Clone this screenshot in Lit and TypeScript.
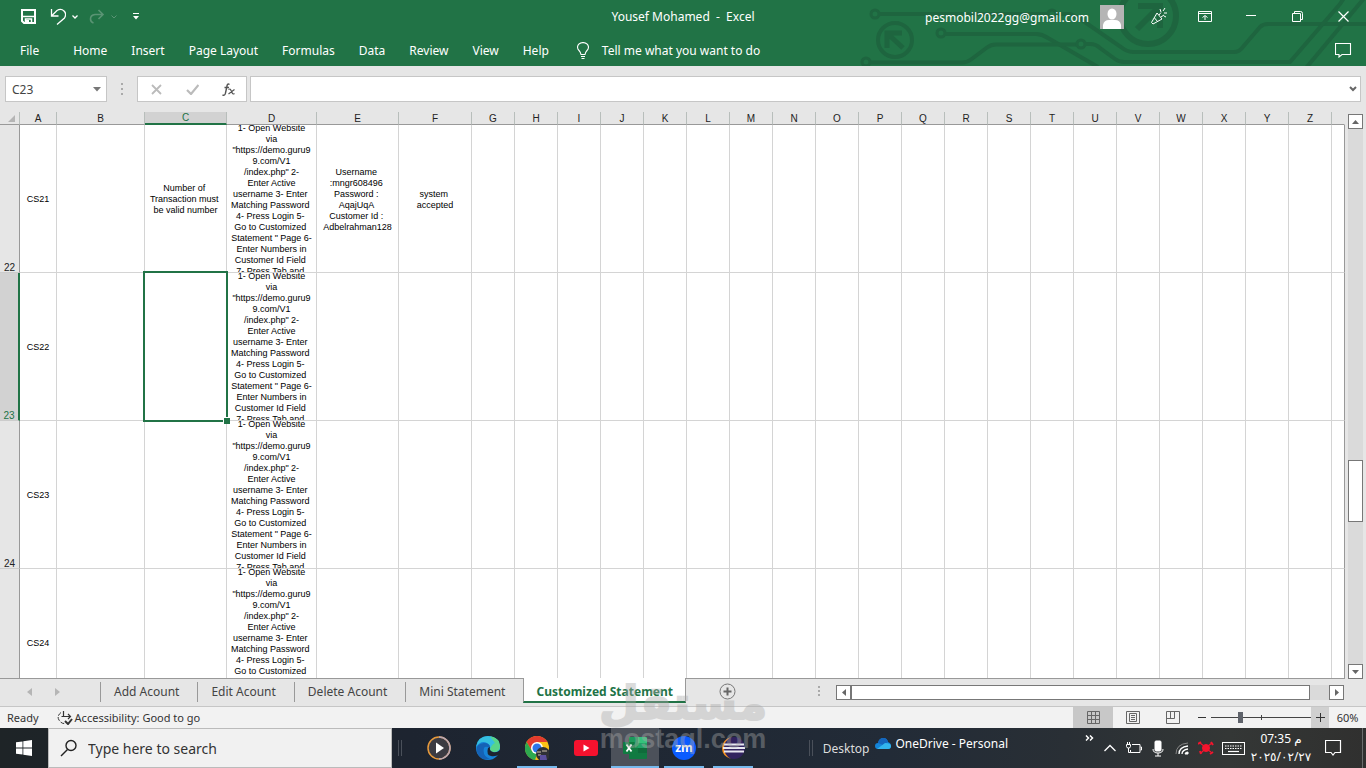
import { LitElement, html, css, svg, nothing } from "lit";
import { customElement } from "lit/decorators.js";
import { classMap } from "lit/directives/class-map.js";

const ui = css`
  * { box-sizing: border-box; }
  button, input, select { font: inherit; color: inherit; margin: 0; }
  button { background: none; border: 0; padding: 0; display: flex; align-items: center; justify-content: center; white-space: nowrap; }
  svg { display: block; flex: none; }
  .sr { position: absolute; width: 1px; height: 1px; overflow: hidden; clip-path: inset(50%); }
`;

const glyph = (w: number, h: number, body: unknown) =>
  html`<svg width=${w} height=${h} viewBox="0 0 ${w} ${h}" fill="none" stroke="currentColor" aria-hidden="true">${body}</svg>`;

/* ---------- Title bar and ribbon tabs ---------- */

@customElement("x-ribbon")
class Ribbon extends LitElement {
  static styles = [ui, css`
    :host { display: block; position: relative; background: #217346; color: #fff; font-size: 12px; overflow: hidden; }
    .art { position: absolute; right: 0; top: 0; color: #1e653f; }
    .title { position: relative; display: grid; grid-template-columns: 1fr auto 1fr; height: 33px; align-items: center; }
    .quick { display: flex; align-items: center; padding-left: 21px; }
    .quick button { height: 32px; }
    .undo { margin-left: 14px; gap: 6px; }
    .redo { margin-left: 11px; gap: 6px; color: #5a9474; }
    .more { margin-left: 16px; }
    .name { margin: 0; font-size: 12px; font-weight: 400; white-space: pre; }
    .account { display: flex; justify-content: flex-end; align-items: center; }
    .mail { padding: 2px 11px 0 0; color: #fff; text-decoration: none; }
    .avatar { margin-right: 12px; }
    .account button { width: 46px; height: 32px; }
    .tabs { position: relative; display: flex; align-items: center; height: 33px; padding: 2px 14px 0 20px; }
    .tabs button { height: 30px; margin-right: 24px; }
    .tabs .file { margin-right: 34px; }
    .tabs .tell { gap: 13px; margin: 0 auto 0 4px; }
    .tabs .note { margin: 0; }
  `];
  render() {
    return html`
      <svg class="art" width="510" height="66" viewBox="856 0 510 66" fill="none" stroke="currentColor" stroke-width="4" aria-hidden="true">
        <circle cx="875" cy="14" r="4" stroke-width="3"/><path d="M879 14H1048"/><circle cx="1052" cy="14" r="4" stroke-width="3"/>
        <path d="M1056 14h14l9 4 42 29q6 5 12 5h101q5 0 8-4l18-21q3-3 8-3h98"/>
        <circle cx="895" cy="40" r="17"/><path d="M887 48V33h15M888 34l15 14" stroke-width="5"/>
        <circle cx="941" cy="33" r="4" stroke-width="3"/><path d="M945 34h91q6 0 12 4l50 29"/>
        <circle cx="866" cy="62" r="4" stroke-width="3"/><path d="M870 62.500h92q5 0 9-3l16-12q4-3 9-3h81"/>
        <circle cx="1081" cy="44" r="4" stroke-width="3"/><path d="M1085 44h5q6 0 10 4l15 11q4 3 9 3h166l50-58 4-6M1306 68l60-72"/>
        <circle cx="1148" cy="16" r="28" stroke-width="6"/><path d="M1138 6h22v22M1159 7l-22 22" stroke-width="6"/>
      </svg>
      <header class="title">
        <div class="quick">
          <button aria-label="Save">${glyph(15, 15, svg`<path d="M1 1h13v13H3L1 12z" stroke-width="2"/><path d="M2 7.500h11M4.500 14v-4h6v4" stroke-width="1.500"/><path d="M5 11h3v3H5z" fill="currentColor" stroke="none"/>`)}</button>
          <button class="undo" aria-label="Undo">${glyph(16, 17, svg`<path d="M1.500 1v7h7M1.500 8L7 2.500Q11 0 14 3t.5 7L7 16.500" stroke-width="1.300"/>`)}${glyph(6, 4, svg`<path d="M.5.5L3 3 5.500.5" stroke-width="1.300"/>`)}</button>
          <button class="redo" aria-label="Redo" disabled>${glyph(16, 15, svg`<path d="M9.500 1L14 5.500 9.500 10M14 5.500H6Q1.500 6 1.500 10q0 3 3 4" stroke-width="1.600"/>`)}${glyph(6, 4, svg`<path d="M.5.5L3 3 5.500.5"/>`)}</button>
          <button class="more" aria-label="Customize toolbar">${glyph(6, 7, svg`<path d="M0 .5h6"/><path d="M0 3h6L3 6.500z" fill="currentColor" stroke="none"/>`)}</button>
        </div>
        <h1 class="name">Yousef Mohamed  -  Excel</h1>
        <div class="account">
          <a class="mail" href="#">pesmobil2022gg@gmail.com</a>
          <svg class="avatar" width="24" height="24" viewBox="0 0 24 24" aria-hidden="true"><path fill="#b4b4b4" d="M0 0h24v24H0z"/><ellipse cx="12" cy="9" rx="4.500" ry="5.500" fill="#fff"/><path d="M3 24v-4q1-5 6-5h6q5 0 6 5v4z" fill="#fff"/></svg>
          <button aria-label="What's new">${glyph(16, 17, svg`<path d="M6 5l5 6-9 5-1.500-1.500zM3.500 10l3.500 4M8 7L10 4.500M10 9l3-2M9 1l1 3M12 3l2-3M13 5h3M13 8l2 1"/>`)}</button>
          <button aria-label="Ribbon display options">${glyph(14, 11, svg`<path d="M.5.5h13v10H.5zM.5 2.500h13M7 9V5M4.500 6.500L7 4.500l2.500 2"/>`)}</button>
          <button aria-label="Minimize">${glyph(10, 3, svg`<path d="M0 .5h10"/>`)}</button>
          <button aria-label="Restore">${glyph(11, 11, svg`<path d="M.5 2.500h8v8h-8zM2.500 2V.5h6q2 0 2 2v6H9"/>`)}</button>
          <button aria-label="Close">${glyph(11, 11, svg`<path d="M.5.5l10 10M10.500.5l-10 10" stroke-width="1.200"/>`)}</button>
        </div>
      </header>
      <nav class="tabs">
        <button class="file">File</button>
        ${["Home", "Insert", "Page Layout", "Formulas", "Data", "Review", "View", "Help"].map((t) => html`<button>${t}</button>`)}
        <button class="tell">${glyph(12, 17, svg`<path d="M4 12.500Q3.500 10 2 8.500.5 7 .5 5q.5-4 5.500-4.500 5 .5 5.500 4.500 0 2-1.500 3.500T8 12.500zM4 14.500h4M4.500 16.500h3" stroke-width="1.100"/>`)}Tell me what you want to do</button>
        <button class="note" aria-label="Comments">${glyph(17, 15, svg`<path d="M.5.500h15v11H7L4 14v-2.500H.5z" stroke-width="1.100"/>`)}</button>
      </nav>`;
  }
}

/* ---------- Formula bar ---------- */

@customElement("x-formula-bar")
class FormulaBar extends LitElement {
  static styles = [ui, css`
    :host { display: flex; align-items: center; padding: 10px 5px; font-size: 12px; color: #444; }
    .box { height: 26px; background: #fff; border: 1px solid #c6c6c6; display: flex; align-items: center; }
    .cell { width: 102px; padding-right: 5px; }
    input { border: 0; outline: 0; background: none; padding: 0 6px; min-width: 0; flex: 1; height: 24px; }
    .grip { margin: 0 13px 0 14px; color: #aaa; }
    .actions { width: 110px; margin-right: 3px; color: #bbb; justify-content: space-around; }
    .actions button { width: 36px; height: 24px; }
    .actions .fx { color: #555; }
    .formula { flex: 1; padding-right: 3px; }
  `];
  render() {
    return html`
      <div class="box cell"><input aria-label="Name box" value="C23"><button aria-label="Names">${glyph(8, 5, svg`<path d="M0 0h8L4 4.500z" fill="#777" stroke="none"/>`)}</button></div>
      <svg class="grip" width="3" height="12" viewBox="0 0 3 12" fill="currentColor"><path d="M0 0h2v2H0zM0 5h2v2H0zM0 10h2v2H0z"/></svg>
      <div class="box actions">
        <button aria-label="Cancel">${glyph(11, 11, svg`<path d="M1 1l9 9M10 1l-9 9" stroke-width="1.800"/>`)}</button>
        <button aria-label="Enter">${glyph(13, 11, svg`<path d="M1 6l4 4 7.500-9" stroke-width="2.200"/>`)}</button>
        <button class="fx" aria-label="Insert function">${glyph(13, 13, svg`<path d="M7.500 1.500Q5.500 0 5 3L3.500 10Q3 13 .5 12M2.500 4.500h4.500" stroke-width="1.400"/><path d="M6.500 6.500q1.500-1 2 0l2 4q.5 1 2 0M12.500 6.500l-6 4.500" stroke-width="1.200"/>`)}</button>
      </div>
      <div class="box formula"><input aria-label="Formula"><button aria-label="Expand formula bar">${glyph(8, 6, svg`<path d="M1 1l3 3 3-3" stroke="#666" stroke-width="2"/>`)}</button></div>`;
  }
}

/* ---------- Worksheet grid ---------- */

const STEPS = ["1- Open Website", "via", "\"https://demo.guru9", "9.com/V1", "/index.php\" 2-", "Enter Active", "username 3- Enter ", "Matching Password ", "4- Press Login 5- ", "Go to Customized ", "Statement \" Page 6-", "Enter Numbers in", "Customer Id Field ", "7- Press Tab and "];
const WIDTHS: Record<string, string> = { A: "a", B: "b", C: "c", D: "d", E: "e", F: "f" };
const COLS = [..."ABCDEFGHIJKLMNOPQRSTUVWXYZ"];
const ROWS: { n: number; cells: Record<string, string[]> }[] = [
  { n: 22, cells: { A: ["CS21"], C: ["Number of ", "Transaction must ", "be valid number"], D: STEPS, E: ["Username ", ":mngr608496 ", "Password : ", "AqajUqA ", "Customer Id : ", "Adbelrahman128"], F: ["system ", "accepted"] } },
  { n: 23, cells: { A: ["CS22"], D: STEPS } },
  { n: 24, cells: { A: ["CS23"], D: STEPS } },
  { n: 25, cells: { A: ["CS24"], D: STEPS } },
];

@customElement("x-sheet")
class Sheet extends LitElement {
  static styles = [ui, css`
    :host { display: flex; min-height: 0; flex: 1; font-family: "Liberation Sans", Arial, sans-serif; }
    .view { flex: 1; min-width: 0; overflow: hidden; border-bottom: 1px solid #999; background: #fff; }
    table { width: 100%; border-collapse: separate; border-spacing: 0; table-layout: fixed; }
    .n { width: 20px; } .a { width: 37px; } .b { width: 88px; } .c { width: 82px; } .d { width: 90px; }
    .e { width: 82px; } .f { width: 73px; } .g { width: 43px; }
    th { background: #e6e6e6; font-weight: 400; color: #222; padding: 0; }
    thead th { height: 13px; font-size: 10px; line-height: 11px; border-bottom: 1px solid #999; border-right: 1px solid #b8bebb; }
    thead th.on { background: #d2d2d2; color: #217346; border-bottom: 2px solid #217346; }
    thead th:last-child { border-right-color: #e6e6e6; }
    .corner svg { margin-left: auto; margin-right: 4px; }
    tbody th { vertical-align: bottom; font-size: 10px; line-height: 8px; border-right: 1px solid #999; border-bottom: 1px solid #ccc; }
    tbody th.on { background: #d2d2d2; color: #217346; border-right: 2px solid #217346; }
    td { padding: 0; border-right: 1px solid #d4d4d4; border-bottom: 1px solid #d4d4d4; position: relative; }
    td:last-child { border-right-color: #999; }
    .text { height: 147px; padding-top: 2px; overflow: hidden; display: flex; flex-direction: column; justify-content: center; align-items: center; font-size: 9px; line-height: 11px; color: #000; white-space: pre; }
    .line { flex: none; }
    .pick { position: absolute; inset: -2px; border: 2px solid #217346; z-index: 1; }
    .knob { position: absolute; right: -4px; bottom: -4px; width: 7px; height: 7px; background: #217346; border: solid #fff; border-width: 1px 0 0 1px; }
    .bar { width: 21px; padding: 2px 3px 0; display: flex; flex-direction: column; background: #e6e6e6; }
    .bar button, .thumb { background: #fff; border: 1px solid #777; height: 15px; color: #666; }
    .track { flex: 1; background: #dadada; display: grid; grid-template-rows: 332fr 62fr 142fr; }
    .track .thumb { grid-row: 2; height: auto; }
  `];
  render() {
    return html`
      <div class="view">
        <table>
          <colgroup><col class="n">${COLS.map((c) => html`<col class=${WIDTHS[c] ?? "g"}>`)}<col></colgroup>
          <thead><tr><th class="corner">${glyph(7, 7, svg`<path d="M7 0v7H0z" fill="#b5b5b5" stroke="none"/>`)}</th>${COLS.map((c) => html`<th scope="col" class=${classMap({ on: c === "C" })}>${c}</th>`)}<th></th></tr></thead>
          <tbody>${ROWS.map((r) => html`<tr>
            <th scope="row" class=${classMap({ on: r.n === 23 })}>${r.n}</th>
            ${[...COLS, ""].map((c) => html`<td>${c === "A" || r.cells[c] ? html`<div class="text">${r.cells[c].map((l) => html`<span class="line">${l}</span>`)}</div>` : nothing}${c === "C" && r.n === 23 ? html`<div class="pick"><i class="knob"></i></div>` : nothing}</td>`)}
          </tr>`)}</tbody>
        </table>
      </div>
      <div class="bar">
        <button aria-label="Scroll up">${glyph(7, 4, svg`<path d="M0 4h7L3.500 0z" fill="currentColor" stroke="none"/>`)}</button>
        <div class="track"><div class="thumb"></div></div>
        <button aria-label="Scroll down">${glyph(7, 4, svg`<path d="M0 0h7L3.500 4z" fill="currentColor" stroke="none"/>`)}</button>
      </div>`;
  }
}

/* ---------- Sheet tabs and status bar ---------- */

@customElement("x-footer")
class Footer extends LitElement {
  static styles = [ui, css`
    :host { display: block; color: #444; }
    .sheets { display: flex; height: 28px; border-bottom: 1px solid #c6c6c6; font-size: 12px; align-items: flex-start; }
    .move { display: flex; width: 100px; height: 26px; padding-left: 15px; color: #b5b5b5; }
    .move button { width: 28px; }
    .tab { height: 20px; margin-top: 3px; padding: 0 18px 0 13px; border-left: 1px solid #999; line-height: 20px; }
    .tab.on { height: 25px; margin: -1px 0 0; padding: 4px 12px 0; background: #fff; color: #217346; font-weight: 700; border: solid #999; border-width: 0 1px; border-bottom: 2px solid #217346; }
    .add { margin: 4px auto 0 33px; }
    .grip { margin: 7px 15px 0 0; color: #aaa; }
    .scroll { display: flex; width: 508px; height: 15px; margin: 6px 22px 0 0; background: #dadada; }
    .scroll button { width: 15px; height: 15px; background: #fff; border: 1px solid #777; color: #666; }
    .thumb { flex: 1; background: #fff; border: 1px solid #777; margin-right: 19px; }
    .status { display: flex; align-items: center; height: 21px; background: #f2f2f2; font-size: 11px; padding-left: 7px; color: #333; }
    .access { margin: 0 auto 0 18px; gap: 2px; }
    .mode { width: 40px; height: 21px; color: #666; }
    .mode.on { background: #c8c8c8; }
    .step { width: 18px; height: 21px; color: #333; }
    .plus { background: #d0d0d0; }
    .zoom { position: relative; width: 100px; height: 21px; display: flex; align-items: center; }
    .zoom::before { content: ""; position: absolute; left: 50%; top: 8px; height: 5px; width: 1px; background: #444; }
    .range { appearance: none; width: 100%; height: 11px; background: linear-gradient(#444, #444) center / 100% 1px no-repeat; }
    .range::-webkit-slider-thumb { appearance: none; width: 5px; height: 11px; background: #5f636b; }
    .pct { width: 37px; }
  `];
  render() {
    return html`
      <div class="sheets">
        <div class="move">
          <button aria-label="Previous sheets">${glyph(5, 8, svg`<path d="M5 0v8L0 4z" fill="currentColor" stroke="none"/>`)}</button>
          <button aria-label="Next sheets">${glyph(5, 8, svg`<path d="M0 0v8l5-4z" fill="currentColor" stroke="none"/>`)}</button>
        </div>
        ${["Add Acount", "Edit Acount", "Delete Acount", "Mini Statement", "Customized Statement"].map((t, i) => html`<button class=${classMap({ tab: true, on: i === 4 })}>${t}</button>`)}
        <button class="add" aria-label="New sheet">${glyph(17, 17, svg`<circle cx="8.500" cy="8.500" r="7.500" stroke="#777"/><path d="M8.500 4.500v8M4.500 8.500h8" stroke="#666" stroke-width="2"/>`)}</button>
        <svg class="grip" width="3" height="12" viewBox="0 0 3 12" fill="currentColor"><path d="M0 0h2v2H0zM0 4h2v2H0zM0 8h2v2H0z"/></svg>
        <div class="scroll">
          <button aria-label="Scroll left">${glyph(4, 7, svg`<path d="M4 0v7L0 3.500z" fill="currentColor" stroke="none"/>`)}</button>
          <div class="thumb"></div>
          <button aria-label="Scroll right">${glyph(4, 7, svg`<path d="M0 0v7l4-3.500z" fill="currentColor" stroke="none"/>`)}</button>
        </div>
      </div>
      <div class="status">
        <span>Ready</span>
        <button class="access">${glyph(16, 14, svg`<path d="M4 1.500Q-.5 5 2 9t6 3.500" stroke-dasharray="4 1.500"/><path d="M6.500 0v5M4.500 5.500h9M11 3l2.500 2.500L11 8" stroke-width="1.200"/><path d="M8 10l3 3 4-5" stroke-width="2"/>`)}Accessibility: Good to go</button>
        <button class="mode on" aria-label="Normal">${glyph(13, 13, svg`<path d="M.5.5h12v12H.5zM4.500.5v12M8.500.5v12M.5 4.500h12M.5 8.500h12"/>`)}</button>
        <button class="mode" aria-label="Page layout">${glyph(14, 13, svg`<path d="M.5.500h13v12H.5zM3.500 2.500h7v8h-7zM5 4.500h4M5 6.500h4M5 8.500h4"/>`)}</button>
        <button class="mode" aria-label="Page break preview">${glyph(14, 13, svg`<path d="M.5.500h13v12H.5zM4.500.5v7M8.500.5v7M.5 7.500h8"/>`)}</button>
        <button class="step" aria-label="Zoom out">${glyph(9, 9, svg`<path d="M0 4.500h8"/>`)}</button>
        <label class="zoom"><span class="sr">Zoom</span><input class="range" type="range" min="0" max="100" value="28"></label>
        <button class="step plus" aria-label="Zoom in">${glyph(9, 9, svg`<path d="M0 4.500h9M4.500 0v9"/>`)}</button>
        <button class="pct">60%</button>
      </div>`;
  }
}

/* ---------- Windows taskbar ---------- */

const apps = [
  { name: "Media Player", cls: "", art: svg`<circle cx="12" cy="12" r="11" fill="#3b3b42" stroke="#e79a3c" stroke-width="1.500"/><path d="M12 1a11 11 0 0 1 0 22" fill="none" stroke="#b9a7b5" stroke-width="1.500"/><path d="M9 6.500v11l8-5.500z" fill="#fff"/>` },
  { name: "Edge", cls: "", art: svg`<circle cx="12" cy="12" r="12" fill="#1683d8"/><path d="M0 11Q2 0 12 0t12 10q0 6-6 6-4 0-4-3 1-4-3-6Q5 4 0 11z" fill="#35bfe0"/><path d="M14 .2Q24 2 24 10q0 6-6 6-4 0-4-3 2-5 5-6z" fill="#58d58a"/><path d="M8 12q-2 8 6 11Q4 25 1 16q-2-8 7-9 6 0 6 5l-2-1q-3-1-4 1z" fill="#1562b5"/><path d="M12 12q-2 7 3 8 4 1 9-2v-4q-3 3-7 2-4-1-3-5z" fill="#1d2430"/>` },
  { name: "Chrome", cls: "run", art: svg`<circle cx="12" cy="12" r="12" fill="#fbc116"/><path d="M1.600 6a12 12 0 0 1 20.800 0H12l-5.200 9z" fill="#e33b2e"/><path d="M1.600 6L7 15l5 3-2 6A12 12 0 0 1 1.600 6z" fill="#2da94f"/><circle cx="12" cy="12" r="6" fill="#fff"/><circle cx="12" cy="12" r="4.500" fill="#2d75e8"/><circle cx="18" cy="18" r="7" fill="#2f3035"/><path d="M12 16h4M17 15h5M13 19h3" stroke="#9a9184" stroke-width="1.500"/><path d="M15 19h6l1 5h-7z" fill="#5b4f9d"/>` },
  { name: "YouTube", cls: "", art: svg`<rect y="4" width="24" height="16" rx="3" fill="#f5122e"/><path d="M9.500 8.500v7l6-3.500z" fill="#fff"/>` },
  { name: "Excel", cls: "run active", art: svg`<path d="M6 1h9v22H6z" fill="#1c9a5b"/><path d="M15 1h8q1 0 1 1v5h-9z" fill="#35c27b"/><path d="M15 7h9v5h-9z" fill="#21a366"/><path d="M15 12h9v10q0 1-1 1H6V12z" fill="#117a42"/><path d="M15 12h9v5h-9z" fill="#0f6c3b"/><rect y="6" width="12" height="12" rx="1" fill="#107c41"/><path d="M3.500 8.500l5 7M8.500 8.500l-5 7" stroke="#fff" stroke-width="1.800"/>` },
  { name: "Zoom", cls: "run", art: svg`<circle cx="12" cy="12" r="12" fill="#0b5cff"/><text x="12" y="16" text-anchor="middle" font-size="12" font-weight="700" fill="#fff">zm</text>` },
  { name: "Eclipse", cls: "run", art: svg`<circle cx="13" cy="12" r="11" fill="#32235f"/><path d="M10 1Q1 4 1 12t9 11Q3 19 3 12t7-11z" fill="#f79322"/><path d="M3 8.500h20M2 12h22M3 15.500h20" stroke="#e9e9f2" stroke-width="2"/>` },
];

@customElement("x-taskbar")
class Taskbar extends LitElement {
  static styles = [ui, css`
    :host { display: flex; height: 40px; background: linear-gradient(90deg, #1e2427, #1d2430 30%, #222b37 65%, #292f35 78%, #343736 90%, #30302f); color: #fff; font-size: 12px; }
    .start { width: 48px; }
    .search { width: 344px; background: #f1f1f1; border: 1px solid #bbb; display: flex; align-items: center; padding-left: 11px; color: #222; }
    .search input { flex: 1; min-width: 0; height: 38px; border: 0; outline: 0; background: none; padding: 0 0 0 10px; font-size: 14px; }
    .search input::placeholder { color: #333; opacity: 1; }
    .split { width: 4px; height: 16px; border: solid #4a505a; border-width: 0 1px; align-self: center; margin-left: 6px; }
    .apps { display: flex; gap: 1px; padding-left: 13px; margin-right: auto; }
    .app { width: 48px; height: 40px; position: relative; }
    .run::after { content: ""; position: absolute; left: 4px; right: 4px; bottom: 0; height: 2px; background: #76b9ed; }
    .active { background: #4c515a; }
    .active::after { left: 0; right: 0; }
    .desk { margin-left: 10px; color: #ddd; }
    .drive { gap: 4px; margin: 0 0 0 6px; height: 30px; }
    .over { width: 12px; height: 20px; margin-left: 75px; }
    .tray { display: flex; padding-left: 3px; }
    .tray button { width: 24px; }
    .tray .wide { width: 30px; }
    .tray .clock { width: 66px; flex-direction: column; line-height: 18px; }
    .tray .bell { width: 38px; }
    .edge { width: 4px; border-left: 1px solid #6a6c6c; margin-left: 10px; }
  `];
  render() {
    return html`
      <button class="start" aria-label="Start"><svg width="16" height="16" viewBox="0 0 16 16" fill="#fff"><path d="M0 2.300l6.500-.9v6.200H0zM7.300 1.300L16 0v7.600H7.300zM0 8.400h6.500v6.200L0 13.700zM7.300 8.400H16V16l-8.700-1.300z"/></svg></button>
      <label class="search">${glyph(18, 18, svg`<circle cx="11" cy="6.500" r="5" stroke-width="1.400"/><path d="M7.500 10.500L1 17" stroke-width="1.400"/>`)}<input aria-label="Search" placeholder="Type here to search"></label>
      <i class="split"></i>
      <div class="apps">${apps.map((a) => html`<button class="app ${a.cls}" aria-label=${a.name}><svg width="24" height="24" viewBox="0 0 24 24">${a.art}</svg></button>`)}</div>
      <i class="split"></i>
      <button class="desk">Desktop</button>
      <button class="drive"><svg width="16" height="11" viewBox="0 0 16 11"><path d="M3 5Q4 0 8.500 0 12 0 13 4q3 1 3 4t-3 3H3Q0 11 0 8t3-3z" fill="#1484d8"/><path d="M3 5Q4 0 8.500 0 12 0 13 4L8 7z" fill="#1566bd"/><path d="M2 11l8-6q6 0 6 3t-3 3z" fill="#32b5ee"/></svg>OneDrive - Personal</button>
      <button class="over" aria-label="More">${glyph(9, 6, svg`<path d="M1 .5L3.500 3 1 5.500M5 .5L7.500 3 5 5.500" stroke-width="1.500"/>`)}</button>
      <div class="tray">
        <button aria-label="Hidden icons">${glyph(12, 8, svg`<path d="M.5 7L6 1.500 11.500 7" stroke-width="1.300"/>`)}</button>
        <button aria-label="Battery">${glyph(16, 12, svg`<path d="M6 2.500h8v8H4.500V8M14.500 5h1v3h-1"/><path d="M.5 2.500h4v2Q4.500 6 2.500 6T.5 4.500zM1.500 0v2M3.500 0v2M2.500 6v4.500h2"/>`)}</button>
        <button aria-label="Microphone">${glyph(12, 17, svg`<rect x="3" y="1" width="6" height="10" rx="1" fill="currentColor"/><path d="M1 9q0 4 5 4t5-4M6 13v3M3 16h6"/>`)}</button>
        <button aria-label="Network">${glyph(14, 13, svg`<path d="M1 12Q1 2 13 1" stroke="#888"/><path d="M4 12q0-7 9-8M7 12q0-4 6-5" stroke-width="1.300"/><path d="M10 12q0-2 3-2v2z" fill="currentColor"/>`)}</button>
        <button aria-label="Antivirus">${glyph(16, 14, svg`<g stroke="#f5142d"><circle cx="8" cy="7" r="3.500" fill="#f5142d"/><path d="M2 2l4 3M14 2l-4 3M3 12l3-3M13 11l-3-2" stroke-width="1.200"/><path d="M0 3l3-2M13 1l2 3M2 10l1 3M12 13l3-2" stroke-width="2"/></g>`)}</button>
        <button class="wide" aria-label="Keyboard">${glyph(23, 13, svg`<rect x=".5" y=".5" width="22" height="12"/><path d="M3 4h17M3 6.500h17" stroke-dasharray="1.500 1"/><path d="M6 9.500h11" stroke-width="1.200"/>`)}</button>
        <button class="clock"><span>07:35 م</span><span>٢٠٢٥/٠٢/٢٧</span></button>
        <button class="bell" aria-label="Notifications">${glyph(17, 16, svg`<path d="M.5.500h15v12H10L8 15l-2-2.500H.5z" stroke-width="1.200"/>`)}</button>
      </div>
      <i class="edge"></i>`;
  }
}

@customElement("app-root")
class AppRoot extends LitElement {
  static styles = [ui, css`
    :host { display: flex; flex-direction: column; height: 100vh; overflow: hidden; position: relative; background: #e6e6e6; font-family: "Noto Sans", "Open Sans", "DejaVu Sans", sans-serif; }
    .mark { position: absolute; left: 50%; bottom: 14px; transform: translateX(-50%); display: flex; flex-direction: column; align-items: center; color: #a8a8a8; opacity: 0.4; pointer-events: none; font-weight: 700; z-index: 2; }
    .word { font-family: "DejaVu Sans", sans-serif; font-size: 46px; line-height: 42px; -webkit-text-stroke: 2px #a8a8a8; }
    .site { font-family: "Liberation Sans", sans-serif; font-size: 27px; line-height: 30px; }
  `];
  render() {
    return html`
      <x-ribbon></x-ribbon>
      <x-formula-bar></x-formula-bar>
      <x-sheet></x-sheet>
      <x-footer></x-footer>
      <x-taskbar></x-taskbar>
      <div class="mark"><span class="word" lang="ar">مستقل</span><span class="site">mostaql.com</span></div>`;
  }
}
